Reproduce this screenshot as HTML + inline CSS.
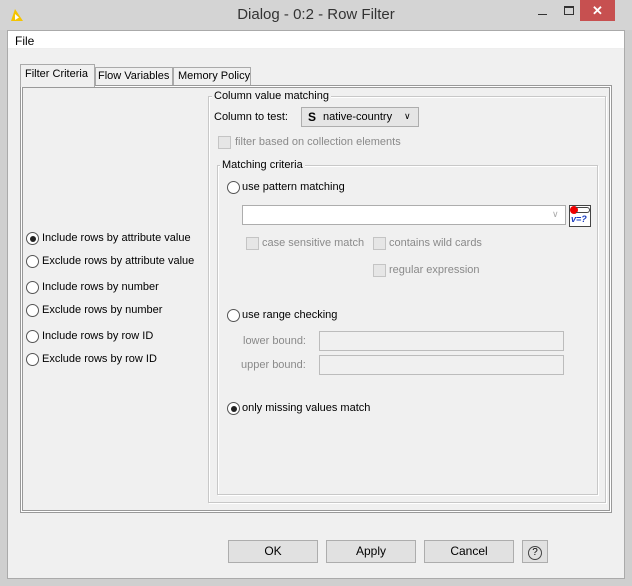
<!DOCTYPE html><html><head><style>
*{margin:0;padding:0;box-sizing:border-box}
body{width:632px;height:586px;background:#cfcfcf;font-family:"Liberation Sans",sans-serif;font-size:11px;color:#000;position:relative;overflow:hidden}
.a{position:absolute}
.t{position:absolute;white-space:nowrap}
.g{color:#8a8a8a}
.rad{position:absolute;width:13px;height:13px;border:1px solid #555;border-radius:50%;background:#fff}
.rad.on::after{content:"";position:absolute;left:2.5px;top:2.5px;width:6px;height:6px;border-radius:50%;background:#222}
.cb{position:absolute;width:13px;height:13px;border:1px solid #c4c4c4;background:#e6e6e6}
.grp{position:absolute;border:1px solid #c8c8c8;box-shadow:inset 1px 1px 0 #fff,1px 1px 0 #fff}
.lg{position:absolute;background:#f0f0f0;padding:0 2px;white-space:nowrap}
.btn{position:absolute;height:23px;border:1px solid #adadad;background:#e1e1e1;text-align:center;line-height:21px;font-size:12px}
.in{position:absolute;border:1px solid #bcbcbc;background:#f0f0f0}
</style></head><body>
<div class="a" style="left:0;top:0;width:632px;height:30px;background:#d4d4d4"></div>
<svg class="a" style="left:9px;top:8px" width="16" height="14"><polygon points="6,1 14,13 2,13" fill="#f4c400"/><polygon points="6,6 10,9.5 6,12" fill="#fff"/></svg>
<div class="t" style="left:0;width:632px;text-align:center;top:6px;font-size:15px;color:#333">Dialog - 0:2 - Row Filter</div>
<div class="a" style="left:538px;top:14px;width:9px;height:1px;background:#333"></div>
<div class="a" style="left:564px;top:6px;width:10px;height:9px;border:1px solid #333;border-top-width:2px"></div>
<div class="a" style="left:580px;top:0;width:35px;height:21px;background:#c75050"></div>
<div class="t" style="left:592px;top:3px;color:#fff;font-size:13px;font-weight:bold">✕</div>
<div class="a" style="left:7px;top:30px;width:618px;height:549px;background:#f0f0f0;border:1px solid #aaa"></div>
<div class="a" style="left:8px;top:31px;width:616px;height:18px;background:#fff;border-bottom:1px solid #eee"></div>
<div class="t" style="left:15px;top:34px;font-size:12px">File</div>
<div class="a" style="left:20px;top:85px;width:592px;height:428px;border:1px solid #999;box-shadow:inset 0 0 0 1px #fff, inset 0 0 0 2px #999"></div>
<div class="a" style="left:20px;top:64px;width:75px;height:23px;border:1px solid #aaa;border-bottom:none;background:#f0f0f0"></div>
<div class="t" style="left:25px;top:68px">Filter Criteria</div>
<div class="a" style="left:95px;top:67px;width:78px;height:18px;border:1px solid #aaa;border-bottom:none;background:#f0f0f0"></div>
<div class="t" style="left:98px;top:70px">Flow Variables</div>
<div class="a" style="left:173px;top:67px;width:78px;height:18px;border:1px solid #aaa;border-bottom:none;background:#f0f0f0"></div>
<div class="t" style="left:178px;top:70px">Memory Policy</div>
<div class="rad on" style="left:26px;top:232px"></div><div class="t" style="left:42px;top:232px">Include rows by attribute value</div>
<div class="rad" style="left:26px;top:255px"></div><div class="t" style="left:42px;top:255px">Exclude rows by attribute value</div>
<div class="rad" style="left:26px;top:281px"></div><div class="t" style="left:42px;top:281px">Include rows by number</div>
<div class="rad" style="left:26px;top:304px"></div><div class="t" style="left:42px;top:304px">Exclude rows by number</div>
<div class="rad" style="left:26px;top:330px"></div><div class="t" style="left:42px;top:330px">Include rows by row ID</div>
<div class="rad" style="left:26px;top:353px"></div><div class="t" style="left:42px;top:353px">Exclude rows by row ID</div>
<div class="grp" style="left:208px;top:96px;width:398px;height:407px"></div>
<div class="lg" style="left:212px;top:90px">Column value matching</div>
<div class="t" style="left:214px;top:111px">Column to test:</div>
<div class="a" style="left:301px;top:107px;width:118px;height:20px;border:1px solid #adadad;background:#e5e5e5"></div>
<div class="t" style="left:308px;top:110px;font-weight:bold;font-size:12px">S</div>
<div class="t" style="left:323px;top:111px">native-country</div>
<div class="t" style="left:404px;top:111px;font-size:9px">&#8744;</div>
<div class="cb" style="left:218px;top:136px"></div><div class="t g" style="left:235px;top:136px">filter based on collection elements</div>
<div class="grp" style="left:217px;top:165px;width:381px;height:330px"></div>
<div class="lg" style="left:220px;top:159px">Matching criteria</div>
<div class="rad" style="left:227px;top:181px"></div><div class="t" style="left:242px;top:181px">use pattern matching</div>
<div class="a" style="left:242px;top:205px;width:324px;height:20px;border:1px solid #adadad;background:#fff"></div>
<div class="t" style="left:552px;top:209px;font-size:9px;color:#aaa">&#8744;</div>
<div class="a" style="left:569px;top:205px;width:22px;height:22px;background:#fff;border:1px solid #444"></div>
<div class="a" style="left:570px;top:206px;width:8px;height:8px;border-radius:50%;background:#e00"></div>
<div class="a" style="left:576px;top:207px;width:14px;height:6px;border:1px solid #444;border-left:none;border-radius:0 3px 3px 0"></div>
<div class="t" style="left:571px;top:214px;font-size:9px;font-style:italic;font-weight:bold;color:#1a3cc0">v=?</div>
<div class="cb" style="left:246px;top:237px"></div><div class="t g" style="left:262px;top:237px">case sensitive match</div>
<div class="cb" style="left:373px;top:237px"></div><div class="t g" style="left:389px;top:237px">contains wild cards</div>
<div class="cb" style="left:373px;top:264px"></div><div class="t g" style="left:389px;top:264px">regular expression</div>
<div class="rad" style="left:227px;top:309px"></div><div class="t" style="left:242px;top:309px">use range checking</div>
<div class="t g" style="left:243px;top:335px">lower bound:</div>
<div class="in" style="left:319px;top:331px;width:245px;height:20px"></div>
<div class="t g" style="left:241px;top:359px">upper bound:</div>
<div class="in" style="left:319px;top:355px;width:245px;height:20px"></div>
<div class="rad on" style="left:227px;top:402px"></div><div class="t" style="left:242px;top:402px">only missing values match</div>
<div class="btn" style="left:228px;top:540px;width:90px">OK</div>
<div class="btn" style="left:326px;top:540px;width:90px">Apply</div>
<div class="btn" style="left:424px;top:540px;width:90px">Cancel</div>
<div class="btn" style="left:522px;top:540px;width:26px"><span style="display:inline-block;width:14px;height:14px;border:1px solid #444;border-radius:50%;line-height:12px;font-size:10px;margin-top:3px">?</span></div>
</body></html>
